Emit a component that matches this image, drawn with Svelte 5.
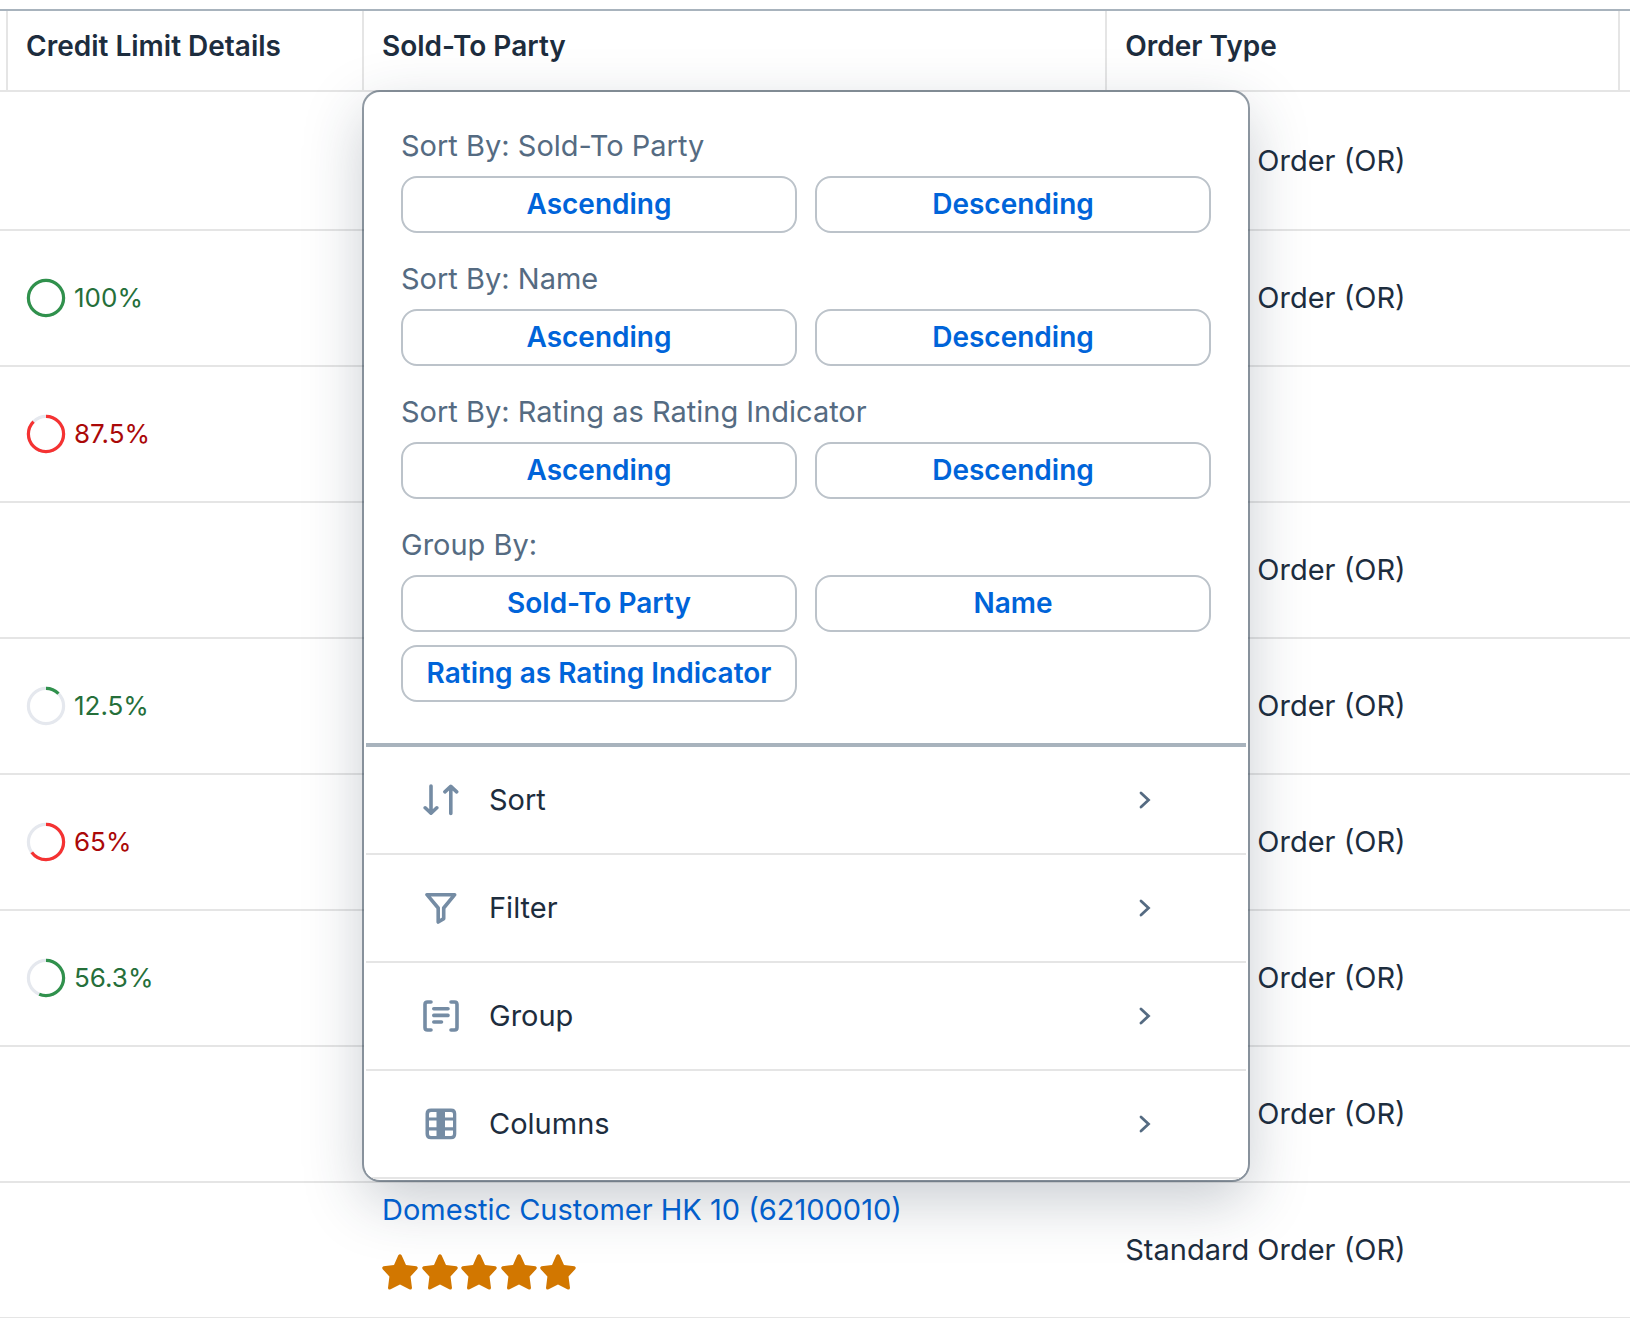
<script>
  const rows = [
    { order: 'Standard Order (OR)' },
    { percent: 100, state: 'good', order: 'Standard Order (OR)' },
    { percent: 87.5, state: 'bad' },
    { order: 'Standard Order (OR)' },
    { percent: 12.5, state: 'good', order: 'Standard Order (OR)' },
    { percent: 65, state: 'bad', order: 'Standard Order (OR)' },
    { percent: 56.3, state: 'good', order: 'Standard Order (OR)' },
    { order: 'Standard Order (OR)' },
    { customer: 'Domestic Customer HK 10 (62100010)', rating: 5, order: 'Standard Order (OR)' }
  ];

  const groups = [
    { label: 'Sort By: Sold-To Party', actions: ['Ascending', 'Descending'] },
    { label: 'Sort By: Name', actions: ['Ascending', 'Descending'] },
    { label: 'Sort By: Rating as Rating Indicator', actions: ['Ascending', 'Descending'] },
    { label: 'Group By:', actions: ['Sold-To Party', 'Name', 'Rating as Rating Indicator'] }
  ];

  const items = ['Sort', 'Filter', 'Group', 'Columns'];
</script>

<main>
  <table>
    <colgroup>
      <col class="edge-start" />
      <col class="credit-col" />
      <col class="party-col" />
      <col />
      <col class="edge-end" />
    </colgroup>
    <thead>
      <tr>
        <td></td>
        <th scope="col">Credit Limit Details</th>
        <th scope="col" class="anchor">
          Sold-To Party
          <div class="popover" role="dialog" aria-label="Column settings">
            <div class="quick">
              {#each groups as group, g}
                <section aria-labelledby="group-{g}">
                  <h2 id="group-{g}">{group.label}</h2>
                  <div class="actions">
                    {#each group.actions as action}
                      <button type="button" class="action">{action}</button>
                    {/each}
                  </div>
                </section>
              {/each}
            </div>
            <ul>
              {#each items as item}
                <li>
                  <button type="button" class="item">
                    <svg class="icon" viewBox="0 0 36 32" aria-hidden="true">
                      {#if item === 'Sort'}
                        <path d="M8 2v27M2.2 23.8L8 29.2l5.800-5.400M27.800 29.500V2.500M21.900 7.800l5.900-5.400 5.900 5.400" />
                      {:else if item === 'Filter'}
                        <path d="M4 2.700H31.700L20.700 16V26.600L15.200 30V16Z" />
                      {:else if item === 'Group'}
                        <path d="M8 2H4.500Q2 2 2 4.500V27.500Q2 30 4.500 30H8M28 2H31.500Q34 2 34 4.500V27.500Q34 30 31.500 30H28M10.800 8.700H25M10.800 15.400H25M10.800 22H18.500" />
                      {:else}
                        <path
                          class="solid"
                          fill-rule="evenodd"
                          d="M8 0.500H28Q33.300 0.500 33.300 5.800V26Q33.300 31.300 28 31.300H8Q2.500 31.300 2.500 26V5.800Q2.500 0.500 8 0.500ZM8 4Q6 4 6 6V9.500H13.500V4ZM22 4V9.500H30V6Q30 4 28 4ZM6 12.500V19.200H13.500V12.500ZM22 12.500V19.200H30V12.500ZM6 22.500V26Q6 28 8 28H13.500V22.500ZM22 22.500V28H28Q30 28 30 26V22.500Z"
                        />
                      {/if}
                    </svg>
                    <span>{item}</span>
                    <svg class="chevron" viewBox="0 0 12 18" aria-hidden="true">
                      <path d="M2 2l7.500 7L2 16" />
                    </svg>
                  </button>
                </li>
              {/each}
            </ul>
          </div>
        </th>
        <th scope="col">Order Type</th>
        <th scope="col" aria-label="More"></th>
      </tr>
    </thead>
    <tbody>
      {#each rows as row}
        <tr>
          <td></td>
          <td>
            {#if row.percent}
              <div class="progress {row.state}">
                <svg viewBox="0 0 40 40" aria-hidden="true">
                  <circle cx="20" cy="20" r="17.600" />
                  <circle class="arc" cx="20" cy="20" r="17.600" pathLength="100" stroke-dasharray="{row.percent} 100" transform="rotate(-90 20 20)" />
                </svg>
                <span>{row.percent}%</span>
              </div>
            {/if}
          </td>
          <td>
            {#if row.customer}
              <a href="#customer">{row.customer}</a>
              <div class="rating" role="img" aria-label="{row.rating} of 5 stars">
                {#each Array(row.rating) as _}
                  <svg viewBox="0 0 36 36" aria-hidden="true">
                    <path d="M16.300 1.300Q18 -0.800 19.600 1.300L24 11 34.500 12.300Q36.600 13.200 35.200 15.200L28.500 22.500 30 34Q29.600 36.200 27.300 35.300L18 30.500 8.600 35.300Q6.200 36.200 6 34L7.400 22.500 0.700 15.200Q-0.600 13.200 1.500 12.300L12 11Z" />
                  </svg>
                {/each}
              </div>
            {/if}
          </td>
          <td>{row.order ?? ''}</td>
          <td></td>
        </tr>
      {/each}
    </tbody>
  </table>
</main>

<style>
  :global(body) {
    margin: 0;
    background: #fff;
    overflow: hidden;
  }

  main {
    padding-top: 9px;
    color: #1d2d3e;
    font: 29px/36px Inter, Roboto, 'Liberation Sans', sans-serif;
  }

  table {
    width: 100%;
    table-layout: fixed;
    border-collapse: separate;
    border-spacing: 0;
    border-top: 2px solid #a8b3bd;
  }

  .edge-start {
    width: 6px;
  }

  .credit-col {
    width: 356px;
  }

  .party-col {
    width: 45.6%;
  }

  .edge-end {
    width: 12px;
  }

  th,
  td {
    box-sizing: border-box;
    padding: 0;
    border-bottom: 2px solid #e5e5e5;
    text-align: left;
    vertical-align: middle;
  }

  th {
    height: 81px;
    padding: 17px 0 0 18px;
    border-left: 2px solid #e5e5e5;
    font-size: 28px;
    font-weight: 600;
    vertical-align: top;
  }

  th:last-child {
    padding: 0;
  }

  tbody td {
    height: 136px;
    padding-left: 20px;
    white-space: nowrap;
  }

  tbody tr:first-child td {
    height: 139px;
  }

  tbody td:first-child,
  tbody td:last-child {
    padding: 0;
  }

  .anchor {
    position: relative;
  }

  .popover {
    position: absolute;
    top: calc(100% + 2px);
    left: 0;
    z-index: 1;
    box-sizing: border-box;
    width: 884px;
    padding: 0 2px 1px;
    border-radius: 16px;
    background: #fff;
    box-shadow:
      0 0 0 2px rgba(34, 53, 72, 0.48),
      0 20px 60px rgba(34, 53, 72, 0.25);
    font-size: 29px;
    font-weight: 400;
    overflow: hidden;
  }

  .quick {
    display: grid;
    gap: 28px;
    padding: 36px 35px 41px;
    border-bottom: 4px solid #a8b3bd;
  }

  h2 {
    margin: 0 0 12px;
    color: #556b82;
    font-size: 29px;
    font-weight: 400;
  }

  .actions {
    display: grid;
    grid-template-columns: 1fr 1fr;
    gap: 13px 18px;
  }

  button {
    box-sizing: border-box;
    margin: 0;
    background: #fff;
    font: inherit;
    cursor: pointer;
  }

  .action {
    height: 57px;
    padding: 0 8px 2px;
    border: 2px solid #bcc3ca;
    border-radius: 16px;
    color: #0064d9;
    font-size: 28px;
    font-weight: 600;
    white-space: nowrap;
  }

  ul {
    margin: 0;
    padding: 0;
    list-style: none;
  }

  .item {
    display: flex;
    align-items: center;
    width: 100%;
    height: 108px;
    padding: 0 95px 0 57px;
    border: 0;
    border-bottom: 2px solid #e5e5e5;
    color: #1d2d3e;
    text-align: left;
  }

  .item span {
    flex: 1;
    padding-left: 30px;
  }

  .icon {
    width: 36px;
    height: 32px;
    fill: none;
    stroke: #758ca4;
    stroke-width: 3.6;
    stroke-linecap: round;
    stroke-linejoin: round;
  }

  .solid {
    fill: #758ca4;
    stroke: none;
  }

  .chevron {
    width: 12px;
    height: 18px;
    fill: none;
    stroke: #556b82;
    stroke-width: 2.8;
    stroke-linecap: round;
  }

  .progress {
    display: flex;
    align-items: center;
    gap: 8px;
    font-size: 26px;
  }

  .progress svg {
    width: 40px;
    height: 40px;
    fill: none;
    stroke: #e5e8ee;
    stroke-width: 3.2;
  }

  .good {
    color: #256f3a;
  }

  .bad {
    color: #aa0808;
  }

  .good .arc {
    stroke: #30914c;
  }

  .bad .arc {
    stroke: #f53232;
  }

  a {
    display: block;
    color: #0064d9;
    text-decoration: none;
  }

  .rating {
    display: flex;
    justify-content: space-between;
    width: 194px;
    padding: 26px 0 18px;
  }

  .rating svg {
    width: 36px;
    height: 36px;
    fill: #d27700;
  }
</style>
